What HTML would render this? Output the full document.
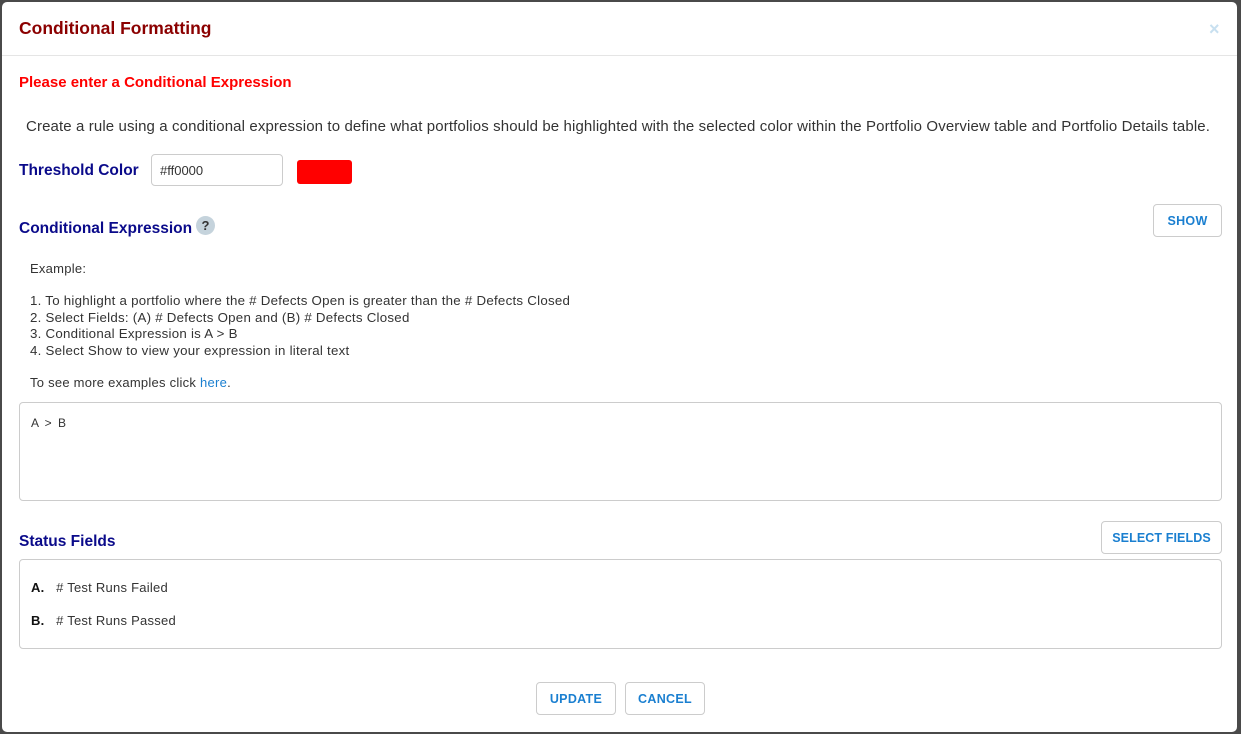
<!DOCTYPE html>
<html><head><meta charset="utf-8"><style>
*{box-sizing:border-box;margin:0;padding:0}
body{width:1241px;height:734px;background:#4a4a4a;font-family:"Liberation Sans",sans-serif;position:relative;overflow:hidden}
.m{position:absolute;left:2px;top:2px;width:1235px;height:730px;background:#fff;border-radius:5px}
.a{position:absolute;white-space:nowrap}
.btn{position:absolute;border:1px solid #ccc;border-radius:4px;color:#1a7fd0;font-weight:bold;font-size:12.5px;letter-spacing:.3px;display:flex;align-items:center;justify-content:center;background:#fff}
.h{color:#0a0a8a;font-weight:bold;font-size:15.5px}
.t{font-size:13px;color:#333;letter-spacing:.25px}
</style></head><body>
<div class="m"></div>
<div class="a" style="left:19px;top:18px;font-size:17.5px;font-weight:bold;color:#8b0000">Conditional Formatting</div>
<div class="a" style="left:1209px;top:19px;font-size:18px;font-weight:bold;color:#c8e0f0">×</div>
<div class="a" style="left:2px;top:55px;width:1235px;height:1px;background:#e5e5e5"></div>
<div class="a" style="left:19px;top:74px;font-size:15px;font-weight:bold;color:#f00">Please enter a Conditional Expression</div>
<div class="a" style="left:26px;top:118px;font-size:15px;color:#333;letter-spacing:0.12px">Create a rule using a conditional expression to define what portfolios should be highlighted with the selected color within the Portfolio Overview table and Portfolio Details table.</div>
<div class="a h" style="left:19px;top:162px">Threshold Color</div>
<div class="a" style="left:151px;top:154px;width:132px;height:32px;border:1px solid #ccc;border-radius:4px;font-size:13px;color:#333;padding:8px 0 0 8px">#ff0000</div>
<div class="a" style="left:297px;top:160px;width:55px;height:24px;background:#f00;border-radius:3px"></div>
<div class="a h" style="left:19px;top:220px">Conditional Expression</div>
<div class="a" style="left:196px;top:216px;width:19px;height:19px;border-radius:50%;background:#c5d3dc;color:#333;font-weight:bold;font-size:13px;text-align:center;line-height:19px">?</div>
<div class="btn" style="left:1153px;top:204px;width:69px;height:33px">SHOW</div>
<div class="a t" style="left:30px;top:261px">Example:</div>
<div class="a t" style="left:30px;top:293px;line-height:16.5px;font-size:13.3px">1. To highlight a portfolio where the # Defects Open is greater than the # Defects Closed<br>2. Select Fields: (A) # Defects Open and (B) # Defects Closed<br>3. Conditional Expression is A &gt; B<br>4. Select Show to view your expression in literal text</div>
<div class="a t" style="left:30px;top:375px">To see more examples click <span style="color:#1a7fd0">here</span>.</div>
<div class="a" style="left:19px;top:402px;width:1203px;height:99px;border:1px solid #ccc;border-radius:4px;font-size:12px;color:#333;padding:13px 0 0 11px;word-spacing:3px">A &gt; B</div>
<div class="a h" style="left:19px;top:533px">Status Fields</div>
<div class="btn" style="left:1101px;top:521px;width:121px;height:33px;letter-spacing:.1px">SELECT FIELDS</div>
<div class="a" style="left:19px;top:559px;width:1203px;height:90px;border:1px solid #ccc;border-radius:4px"></div>
<div class="a t" style="left:31px;top:580px"><b style="color:#111">A.</b>&nbsp;&nbsp; # Test Runs Failed</div>
<div class="a t" style="left:31px;top:613px"><b style="color:#111">B.</b>&nbsp;&nbsp; # Test Runs Passed</div>
<div class="btn" style="left:536px;top:682px;width:80px;height:33px">UPDATE</div>
<div class="btn" style="left:625px;top:682px;width:80px;height:33px">CANCEL</div>
</body></html>
